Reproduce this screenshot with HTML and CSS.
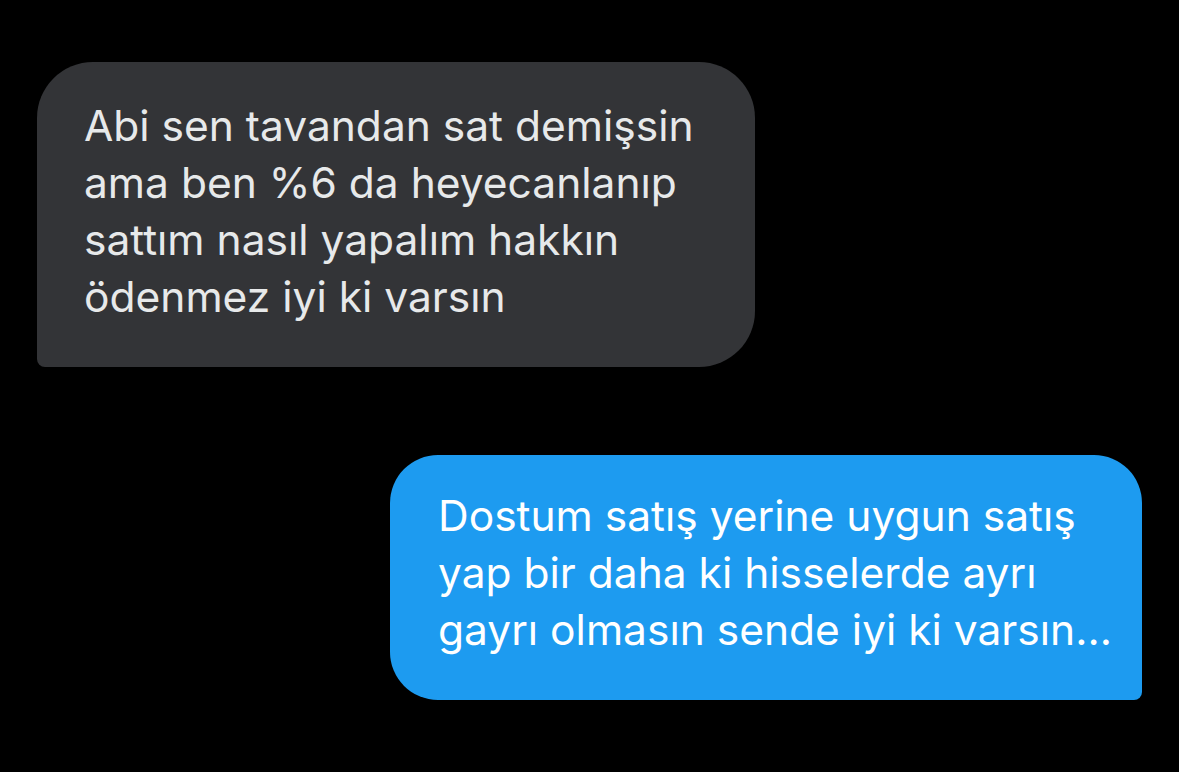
FILE: index.html
```html
<!DOCTYPE html>
<html lang="tr">
<head>
<meta charset="utf-8">
<title>DM</title>
<link rel="stylesheet" href="styles.css">
</head>
<body>
<main class="chat">
  <div class="bubble bubble-in">Abi sen tavandan sat demişsin<br>ama ben %6 da heyecanlanıp<br>sattım nasıl yapalım hakkın<br>ödenmez iyi ki varsın</div>
  <div class="meta">&nbsp;</div>
  <div class="bubble bubble-out">Dostum satış yerine uygun satış<br>yap bir daha ki hisselerde ayrı<br>gayrı olmasın sende iyi ki varsın...</div>
</main>
</body>
</html>
```
FILE: styles.css
```css
* { box-sizing: border-box; }
html, body {
  margin: 0;
  padding: 0;
  background: #000;
  width: 1179px;
  height: 772px;
  overflow: hidden;
}
.chat {
  display: flex;
  flex-direction: column;
  padding-top: 62px;
  font-family: Inter, "Noto Sans", sans-serif;
  font-size: 42.5px;
  line-height: 57px;
}
.bubble {
  padding: 35px 30px 30px 47px;
  white-space: nowrap;
}
.bubble-in {
  margin-left: 37px;
  width: 718px;
  height: 305px;
  background: #333437;
  color: #e7e9ea;
  border-radius: 56px 56px 56px 8px;
}
.meta {
  height: 88px;
}
.bubble-out {
  margin-left: 390px;
  width: 752px;
  height: 245px;
  padding: 32px 30px 30px 48px;
  background: #1d9bf0;
  color: #fff;
  border-radius: 48px 48px 8px 48px;
}
```
